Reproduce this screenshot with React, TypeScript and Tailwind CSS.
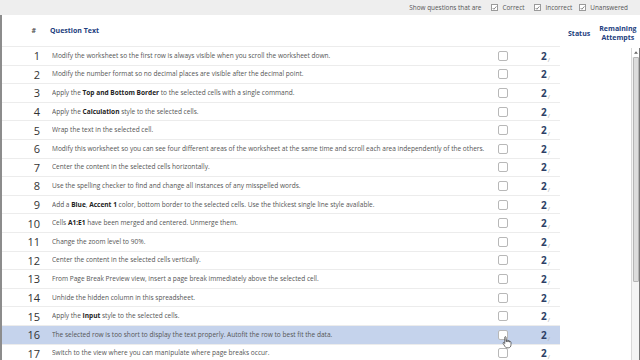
import * as React from 'react';

type Seg = string | { b: string };

interface IRow {
  n: number;
  text: Seg[];
}

const rows: IRow[] = [
  { n: 1, text: ['Modify the worksheet so the first row is always visible when you scroll the worksheet down.'] },
  { n: 2, text: ['Modify the number format so no decimal places are visible after the decimal point.'] },
  { n: 3, text: ['Apply the ', { b: 'Top and Bottom Border' }, ' to the selected cells with a single command.'] },
  { n: 4, text: ['Apply the ', { b: 'Calculation' }, ' style to the selected cells.'] },
  { n: 5, text: ['Wrap the text in the selected cell.'] },
  {
    n: 6,
    text: [
      'Modify this worksheet so you can see four different areas of the worksheet at the same time and scroll each area independently of the others.',
    ],
  },
  { n: 7, text: ['Center the content in the selected cells horizontally.'] },
  { n: 8, text: ['Use the spelling checker to find and change all instances of any misspelled words.'] },
  {
    n: 9,
    text: [
      'Add a ',
      { b: 'Blue' },
      ', ',
      { b: 'Accent 1' },
      ' color, bottom border to the selected cells. Use the thickest single line style available.',
    ],
  },
  { n: 10, text: ['Cells ', { b: 'A1:E1' }, ' have been merged and centered. Unmerge them.'] },
  { n: 11, text: ['Change the zoom level to 90%.'] },
  { n: 12, text: ['Center the content in the selected cells vertically.'] },
  { n: 13, text: ['From Page Break Preview view, insert a page break immediately above the selected cell.'] },
  { n: 14, text: ['Unhide the hidden column in this spreadsheet.'] },
  { n: 15, text: ['Apply the ', { b: 'Input' }, ' style to the selected cells.'] },
  { n: 16, text: ['The selected row is too short to display the text properly. Autofit the row to best fit the data.'] },
  { n: 17, text: ['Switch to the view where you can manipulate where page breaks occur.'] },
];

const Tick = () => (
  <span className="inline-flex items-center justify-center w-[7px] h-[7px] border border-[#9a9a9a] bg-white mr-[4px]">
    <svg viewBox="0 0 8 8" className="w-[6px] h-[6px]">
      <path d="M1 4 L3 6 L7 1.5" fill="none" stroke="#555" strokeWidth="1.1" />
    </svg>
  </span>
);

const Cursor = () => (
  <svg viewBox="0 0 12 14" className="absolute left-[502px] top-[336px] w-[11px] h-[13px]">
    <path
      d="M3 1.2 C3 0.5 4.4 0.5 4.4 1.2 L4.4 6 L5 6 L5 4.8 C5 4.1 6.3 4.1 6.3 4.8 L6.3 6.2 L6.8 6.2 L6.8 5.3 C6.8 4.6 8.1 4.6 8.1 5.3 L8.1 6.5 L8.6 6.5 C8.6 5.9 9.8 5.9 9.8 6.6 L9.8 9.5 C9.8 11.3 8.8 12.8 7 12.8 L5.4 12.8 C4.2 12.8 3.6 12 3 11 L1.2 8 C0.8 7.3 1.8 6.6 2.4 7.3 L3 8.1 Z"
      fill="#fff"
      stroke="#222"
      strokeWidth="0.7"
    />
  </svg>
);

const Row: React.FunctionComponent<IRow> = ({ n, text }) => {
  const active = n === 16;
  return (
    <div
      className={
        'flex items-center h-[18.6px] border-b border-[#ececec] ' + (active ? 'bg-[#c5d3ec]' : 'bg-white')
      }
    >
      <div className="w-[38px] text-right text-[11px] leading-none text-[#333]">{n}</div>
      <div className="ml-[12px] w-[446px] text-[6.55px] text-[#555] whitespace-nowrap overflow-hidden">
        {text.map((s, i) =>
          typeof s === 'string' ? (
            <span key={i}>{s}</span>
          ) : (
            <b key={i} className="font-bold text-[#222]">
              {s.b}
            </b>
          ),
        )}
      </div>
      <div className="w-[10px] h-[10px] border border-[#b8b8b8] rounded-[2px] bg-white" />
      <div className="ml-[33px] flex items-end">
        <span className="text-[10px] leading-none font-bold text-[#2e3f66]">2</span>
        <span className="ml-[1px] text-[6px] leading-none text-[#aaa] translate-y-[2px]">/</span>
      </div>
    </div>
  );
};

export default function App() {
  return (
    <div
      className="relative w-[640px] h-[360px] overflow-hidden bg-white"
      style={{ fontFamily: '"Open Sans", "Noto Sans", sans-serif' }}
    >
      <div className="h-[15px] bg-[#eeeeee] flex items-center justify-end pr-[12px] text-[6.4px] text-[#555]">
        <span className="mr-[10px]">Show questions that are</span>
        <Tick />
        <span className="mr-[10px]">Correct</span>
        <Tick />
        <span className="mr-[7px]">Incorrect</span>
        <Tick />
        <span>Unanswered</span>
      </div>

      <div className="flex h-[345px]">
        <div className="w-[2px] bg-[#8c8c8c]" />
        <div className="w-[558px]">
          <div className="flex items-end h-[32px] border-b border-[#ececec] pb-[10px] text-[7px] font-bold text-[#23407e]">
            <div className="w-[34px] text-right text-[#555]">#</div>
            <div className="ml-[14px]">Question Text</div>
          </div>
          {rows.map((r) => (
            <Row key={r.n} {...r} />
          ))}
        </div>
        <div className="flex-1 flex items-start pt-[12px] pl-[8px] text-[7px] font-bold text-[#23407e]">
          <div className="mt-[2px]">Status</div>
          <div className="ml-[9px] text-center leading-[9px] -mt-[3px]">
            Remaining
            <br />
            Attempts
          </div>
        </div>
      </div>

      <div className="absolute right-0 top-[48px] bottom-0 w-[9px] flex flex-col border-l border-[#d8d8d8] bg-[#f4f4f4]">
        <div className="h-[9px] flex items-center justify-center bg-white">
          <svg viewBox="0 0 6 4" className="w-[4px] h-[3px]">
            <path d="M0 4 L3 0 L6 4 Z" fill="#666" />
          </svg>
        </div>
        <div className="h-[225px] mx-[1px] bg-[#dcdcdc] border border-[#b5b5b5] rounded-[1px]" />
        <div className="flex-1" />
      </div>
      <div className="absolute right-0 top-[48px] bottom-0 w-[1px] bg-[#777]" />

      <Cursor />
    </div>
  );
}
